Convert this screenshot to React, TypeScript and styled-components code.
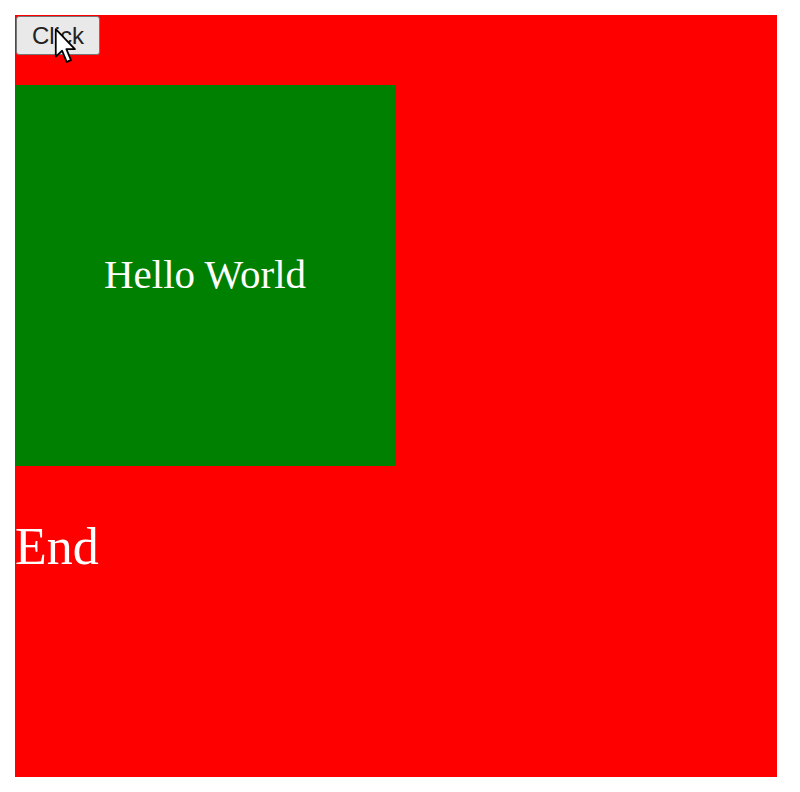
import React from "react";
import styled, { createGlobalStyle } from "styled-components";

const Global = createGlobalStyle`
  html, body { margin: 0; padding: 0; background: #ffffff; }
  body { font-family: "Liberation Serif", "Times New Roman", serif; }
`;

const Page = styled.div`
  padding: 15px;
`;

const Stage = styled.div`
  position: relative;
  width: 762px;
  height: 762px;
  background: #ff0000;
  display: flex;
  flex-direction: column;
  align-items: flex-start;
`;

const Button = styled.button`
  margin: 1px 0 0 1px;
  width: 84px;
  height: 39px;
  font-family: "Liberation Sans", Arial, sans-serif;
  font-size: 24px;
  color: #222;
  background: #e9e9e9;
  border: 1px solid #767676;
  border-radius: 3px;
  padding: 0;
`;

const Cursor = styled.svg`
  position: absolute;
  left: 39px;
  top: 12px;
  width: 23px;
  height: 38px;
  pointer-events: none;
`;

const Panel = styled.div`
  margin-top: 30px;
  width: 380px;
  height: 381px;
  background: #008000;
  display: flex;
  align-items: center;
  justify-content: center;
  color: #ffffff;
  font-size: 41px;
  padding-bottom: 3px;
  box-sizing: border-box;
`;

const End = styled.div`
  margin-top: 51px;
  color: #ffffff;
  font-size: 52px;
  line-height: 1.15;
`;

export default function App() {
  return (
    <Page>
      <Global />
      <Stage>
        <Button>Click</Button>
        <Cursor viewBox="0 0 13 21">
          <path
            d="M1 1 L1 16.5 L4.6 13.2 L7.2 19.5 L9.6 18.5 L7 12.3 L11.8 12.3 Z"
            fill="#ffffff"
            stroke="#000000"
            strokeWidth="1"
            strokeLinejoin="round"
          />
        </Cursor>
        <Panel>Hello World</Panel>
        <End>End</End>
      </Stage>
    </Page>
  );
}
